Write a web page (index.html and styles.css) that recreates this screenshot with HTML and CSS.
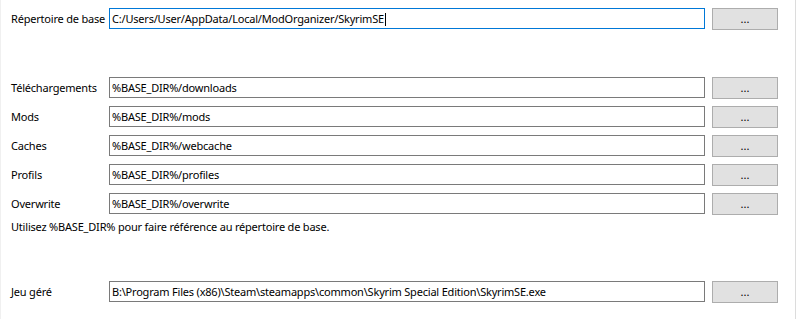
FILE: index.html
```html
<!DOCTYPE html>
<html lang="fr">
<head>
    <meta charset="UTF-8">
    <meta name="viewport" content="width=device-width, initial-scale=1.0">
    <title>Chemins</title>
    <link rel="stylesheet" href="styles.css">
</head>
<body>
<div class="paths-panel">
    <div class="path-row base-row">
        <label class="path-label">Répertoire de base</label>
        <div class="path-field focused">C:/Users/User/AppData/Local/ModOrganizer/SkyrimSE<span class="caret"></span></div>
        <button class="browse-btn" type="button">...</button>
    </div>

    <div class="path-group">
        <div class="path-row">
            <label class="path-label">Téléchargements</label>
            <div class="path-field">%BASE_DIR%/downloads</div>
            <button class="browse-btn" type="button">...</button>
        </div>
        <div class="path-row">
            <label class="path-label">Mods</label>
            <div class="path-field">%BASE_DIR%/mods</div>
            <button class="browse-btn" type="button">...</button>
        </div>
        <div class="path-row">
            <label class="path-label">Caches</label>
            <div class="path-field">%BASE_DIR%/webcache</div>
            <button class="browse-btn" type="button">...</button>
        </div>
        <div class="path-row">
            <label class="path-label">Profils</label>
            <div class="path-field">%BASE_DIR%/profiles</div>
            <button class="browse-btn" type="button">...</button>
        </div>
        <div class="path-row">
            <label class="path-label">Overwrite</label>
            <div class="path-field">%BASE_DIR%/overwrite</div>
            <button class="browse-btn" type="button">...</button>
        </div>
    </div>
    <p class="path-hint">Utilisez %BASE_DIR% pour faire référence au répertoire de base.</p>

    <div class="path-row game-row">
        <label class="path-label">Jeu géré</label>
        <div class="path-field">B:\Program Files (x86)\Steam\steamapps\common\Skyrim Special Edition\SkyrimSE.exe</div>
        <button class="browse-btn" type="button">...</button>
    </div>
</div>
</body>
</html>
```

FILE: styles.css
```css
html, body {
    margin: 0;
    padding: 0;
    background: #fff;
}
.paths-panel {
    box-sizing: border-box;
    width: 796px;
    height: 319px;
    padding: 8px 0 0 10px;
    border-left: 1px solid #f0f0f0;
    border-right: 1px solid #dcdcdc;
    font-family: "Noto Sans", "Open Sans", sans-serif;
    font-size: 11px;
    letter-spacing: -0.2px;
    color: #000;
}
.path-row {
    display: grid;
    grid-template-columns: 98px 596px 73px;
    align-items: start;
    height: 21px;
}
.path-group {
    display: grid;
    row-gap: 8px;
    margin-top: 48px;
}
.path-label {
    line-height: 21px;
    white-space: nowrap;
}
.path-field {
    box-sizing: border-box;
    height: 21px;
    padding: 0 2px;
    border: 1px solid #7a7a7a;
    line-height: 19px;
    white-space: nowrap;
    overflow: hidden;
}
.path-field.focused {
    border-color: #0078d7;
}
.caret {
    display: inline-block;
    width: 1px;
    height: 13px;
    margin-left: 1px;
    vertical-align: -3px;
    background: #000;
}
.browse-btn {
    box-sizing: border-box;
    height: 22px;
    margin: 0 0 0 7px;
    padding: 0;
    border: 1px solid #adadad;
    background: #e1e1e1;
    font: inherit;
    font-size: 11px;
    line-height: 20px;
    color: #000;
}
.path-hint {
    margin: 5px 0 0;
    line-height: 16px;
}
.game-row {
    margin-top: 46px;
}
```
